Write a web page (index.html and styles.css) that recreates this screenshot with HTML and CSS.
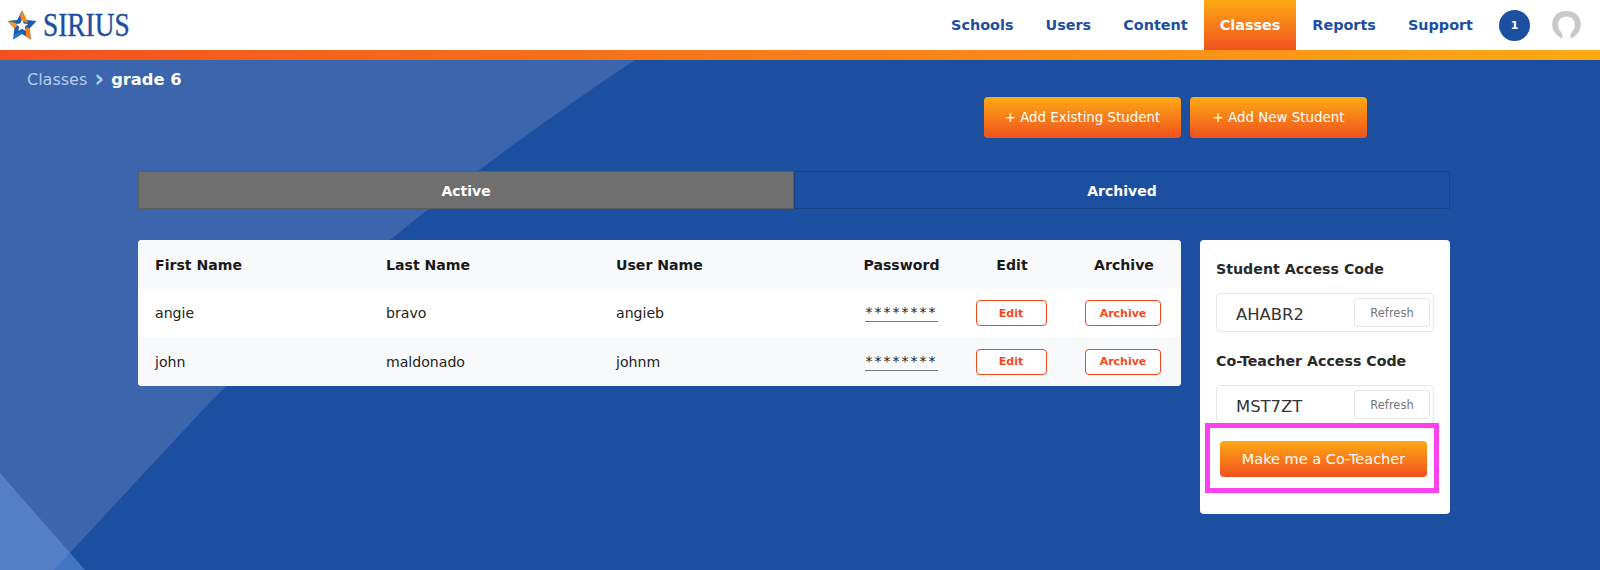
FILE: index.html
```html
<!DOCTYPE html>
<html lang="en">
<head>
    <meta charset="UTF-8">
    <meta name="viewport" content="width=device-width, initial-scale=1.0">
    <title>Sirius - Classes</title>
    <link rel="stylesheet" href="styles.css">
</head>
<body>
    <div class="header">
        <div class="logo">
            <svg class="logo-star" viewBox="0 0 30 30" width="30" height="30">
                <path d="M15 .5 L19.7 10 L29.5 11 L22.6 18.5 L24 29.5 L15 24 L6 29.5 L7.4 18.5 L.5 11 L10.3 10 Z" fill="#1c5cb0"/>
                <path d="M15 .5 L19.7 10 L21 13 L15 11 L13 6 Z" fill="#f58a1f"/>
                <path d="M.5 11 L9 13 L10 16 L7.4 18.5 Z" fill="#f59a22"/>
                <path d="M19 17 L22.6 18.5 L24 29.5 L19 26.5 Z" fill="#f47f20"/>
                <path d="M6 29.5 L8 24 L15 22 L15 24 Z" fill="#2a78c8"/>
                <path d="M15 9.5 L16.7 13.5 L21 14 L17.8 16.8 L18.7 21 L15 18.8 L11.3 21 L12.2 16.8 L9 14 L13.3 13.5 Z" fill="#fff"/>
            </svg>
            <span class="logo-text">SIRIUS</span>
        </div>
        <div class="nav">
            <a class="nav-link">Schools</a>
            <a class="nav-link">Users</a>
            <a class="nav-link">Content</a>
            <a class="nav-link active">Classes</a>
            <a class="nav-link">Reports</a>
            <a class="nav-link">Support</a>
            <span class="badge">1</span>
            <svg class="avatar" viewBox="2 2 26 25.5" width="29" height="28">
                <path d="M11 27 C5 24 2 20 2 14 C2 6 8 2 15 2 C22 2 28 6 28 14 C28 20 25 24 19 27 C18 24 19 23 20 21 C23 18 23 14 22 11 C20 8 18 7 15 7 C12 7 10 8 8 11 C7 14 7 18 10 21 C11 23 12 24 11 27 Z" fill="#c9c9c9"/>
            </svg>
        </div>
    </div>
    <div class="accent-bar"></div>

    <div class="main">
        <div class="breadcrumb">
            <span class="crumb">Classes</span>
            <span class="crumb-sep">›</span>
            <span class="crumb-current">grade 6</span>
        </div>

        <div class="actions">
            <button class="btn btn-existing">+ Add Existing Student</button>
            <button class="btn btn-new">+ Add New Student</button>
        </div>

        <div class="tabs">
            <div class="tab active">Active</div>
            <div class="tab">Archived</div>
        </div>

        <div class="content">
            <div class="table-card">
                <table class="table">
                    <colgroup>
                        <col class="col-first">
                        <col class="col-last">
                        <col class="col-user">
                        <col class="col-pass">
                        <col class="col-edit">
                        <col class="col-archive">
                    </colgroup>
                    <thead>
                        <tr>
                            <th>First Name</th>
                            <th>Last Name</th>
                            <th>User Name</th>
                            <th class="center">Password</th>
                            <th class="center shift">Edit</th>
                            <th class="center shift">Archive</th>
                        </tr>
                    </thead>
                    <tbody>
                        <tr>
                            <td>angie</td>
                            <td>bravo</td>
                            <td>angieb</td>
                            <td class="center"><span class="stars">********</span></td>
                            <td class="center"><button class="btn-outline btn-edit">Edit</button></td>
                            <td class="center"><button class="btn-outline btn-archive">Archive</button></td>
                        </tr>
                        <tr>
                            <td>john</td>
                            <td>maldonado</td>
                            <td>johnm</td>
                            <td class="center"><span class="stars">********</span></td>
                            <td class="center"><button class="btn-outline btn-edit">Edit</button></td>
                            <td class="center"><button class="btn-outline btn-archive">Archive</button></td>
                        </tr>
                    </tbody>
                </table>
            </div>

            <div class="side-card">
                <h4 class="code-title">Student Access Code</h4>
                <div class="code-box">
                    <span class="code">AHABR2</span>
                    <button class="btn-refresh">Refresh</button>
                </div>
                <h4 class="code-title">Co-Teacher Access Code</h4>
                <div class="code-box">
                    <span class="code">MST7ZT</span>
                    <button class="btn-refresh">Refresh</button>
                </div>
                <div class="highlight">
                    <button class="btn btn-wide">Make me a Co-Teacher</button>
                </div>
            </div>
        </div>
    </div>
</body>
</html>
```

FILE: styles.css
```css
* {
    box-sizing: border-box;
}

body {
    font-family: "DejaVu Sans", sans-serif;
    background-color: #1c4fa0;
    margin: 0;
    padding: 0;
    height: 570px;
    overflow: hidden;
}

button {
    font-family: inherit;
    cursor: pointer;
}

/* header */
.header {
    display: flex;
    justify-content: space-between;
    height: 50px;
    background: white;
}

.logo {
    display: flex;
    align-items: center;
    gap: 6px;
    padding-left: 7px;
}

.logo-text {
    font-family: "Liberation Serif", serif;
    font-size: 33px;
    color: #1c4fa0;
    -webkit-text-stroke: 0.4px #1c4fa0;
    transform: scaleX(0.83);
    transform-origin: left center;
}

.nav {
    display: flex;
    align-items: center;
    height: 50px;
    padding-right: 19px;
}

.nav-link {
    display: flex;
    align-items: center;
    height: 50px;
    padding: 0 16px;
    font-size: 14.4px;
    font-weight: bold;
    color: #1c4fa0;
}

.nav-link.active {
    color: white;
    background: linear-gradient(#fdaa14, #f2511f);
}

.badge {
    display: flex;
    align-items: center;
    justify-content: center;
    width: 31px;
    height: 31px;
    margin-left: 10px;
    padding-top: 1px;
    border-radius: 50%;
    background: #1c4fa0;
    color: white;
    font-size: 11px;
    font-weight: bold;
}

.avatar {
    margin-left: 22px;
}

.accent-bar {
    height: 10px;
    background: linear-gradient(to right, #f2511f, #fdaa14);
}

/* page */
.main {
    position: relative;
    height: 510px;
    padding: 9px 150px 0 138px;
}

.main::before {
    content: "";
    position: absolute;
    inset: 0;
    background: #3b65ad;
    clip-path: path("M0 0 L635 0 Q500 90 390 180 Q300 255 212 340 L54 510 L0 510 Z");
}

.main::after {
    content: "";
    position: absolute;
    inset: 0;
    background: rgba(111, 157, 229, 0.48);
    clip-path: path("M0 413 L85 510 L0 510 Z");
}

.main > * {
    position: relative;
    z-index: 1;
}

.breadcrumb {
    display: flex;
    align-items: center;
    gap: 7px;
    height: 20px;
    margin-left: -111px;
    font-size: 16px;
    color: #b9cbe8;
}

.crumb-sep {
    font-size: 24px;
    line-height: 20px;
    font-weight: bold;
}

.crumb-current {
    font-size: 16.3px;
    font-weight: bold;
    color: white;
}

.actions {
    display: flex;
    gap: 9px;
    margin: 8px 0 33px 846px;
}

.btn {
    height: 41px;
    padding: 0;
    border: none;
    border-radius: 4px;
    background: linear-gradient(#fdaa14, #f2511f);
    color: white;
    font-size: 13.4px;
}

.btn-existing { width: 197px; }
.btn-new { width: 177px; }

.tabs {
    display: flex;
    height: 38px;
    margin-bottom: 31px;
}

.tab {
    flex: 1;
    display: flex;
    align-items: center;
    justify-content: center;
    padding-top: 1px;
    border: 1px solid #174288;
    font-size: 14px;
    font-weight: bold;
    color: white;
}

.tab.active {
    background: #6f6f6f;
    border-color: #5c5c5c;
}

.content {
    display: flex;
    align-items: flex-start;
    gap: 19px;
}

.table-card {
    width: 1043px;
    background: white;
    border-radius: 4px;
    overflow: hidden;
}

.table {
    width: 100%;
    border-collapse: collapse;
    table-layout: fixed;
    font-size: 14.1px;
    color: #222;
}

.col-first { width: 231px; }
.col-last { width: 230px; }
.col-user { width: 247px; }
.col-pass { width: 111px; }
.col-edit { width: 108px; }
.col-archive { width: 116px; }

.table th, .table td {
    height: 48px;
    padding: 0 0 0 17px;
    text-align: left;
}

.table th {
    height: 49px;
    padding-top: 1px;
    color: #1a1a1a;
}

.table tbody tr:nth-child(2) td {
    height: 49px;
}

.table th.center, .table td.center {
    padding: 0;
    text-align: center;
}

.table th.center {
    padding-top: 1px;
}

.table th.shift {
    padding-left: 2px;
}

.table thead tr, .table tbody tr:nth-child(2) {
    background: #f8f9fb;
}

.stars {
    display: inline-block;
    width: 73px;
    border-bottom: 1px solid #777;
    font-size: 14px;
    letter-spacing: 2px;
    line-height: 17px;
    white-space: nowrap;
    vertical-align: middle;
}

.btn-outline {
    height: 26px;
    padding: 0;
    border: 1px solid #f4481c;
    border-radius: 4px;
    background: white;
    color: #f4481c;
    font-size: 11px;
    font-weight: bold;
}

.btn-edit { width: 71px; }
.btn-archive { width: 76px; }

.side-card {
    width: 250px;
    height: 274px;
    padding: 21px 16px 0;
    background: white;
    border-radius: 4px;
}

.code-title {
    margin: 0;
    height: 32px;
    font-size: 14.2px;
    font-weight: bold;
    color: #2a2a2a;
}

.code-box {
    display: flex;
    align-items: center;
    justify-content: space-between;
    height: 39px;
    margin-bottom: 21px;
    padding: 0 3px 0 19px;
    border: 1px solid #e6e6e6;
    border-radius: 4px;
}

.code {
    padding-top: 4px;
    font-size: 16.4px;
    color: #333;
}

.btn-refresh {
    width: 76px;
    height: 29px;
    padding: 0;
    border: 1px solid #e6e6e6;
    border-radius: 3px;
    background: white;
    color: #777;
    font-size: 11.5px;
}

/* pink annotation around the co-teacher button */
.highlight {
    margin: -22px -5px 0 -11px;
    padding: 13px 7px 0 10px;
    height: 70px;
    border: 5px solid #ff40f0;
}

.btn-wide {
    width: 100%;
    height: 36px;
    font-size: 14.5px;
}
```
